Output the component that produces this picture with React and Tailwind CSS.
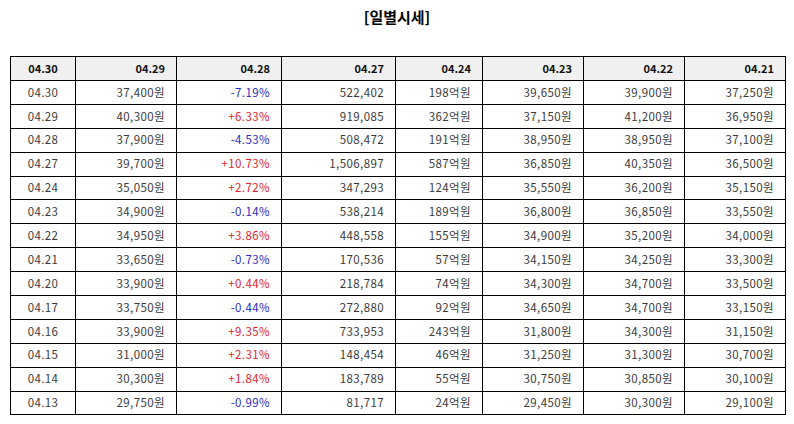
import React from "react";

const headers = ["04.30", "04.29", "04.28", "04.27", "04.24", "04.23", "04.22", "04.21"];

const rows = [
  ["04.30", "37,400원", "-7.19%", "522,402", "198억원", "39,650원", "39,900원", "37,250원"],
  ["04.29", "40,300원", "+6.33%", "919,085", "362억원", "37,150원", "41,200원", "36,950원"],
  ["04.28", "37,900원", "-4.53%", "508,472", "191억원", "38,950원", "38,950원", "37,100원"],
  ["04.27", "39,700원", "+10.73%", "1,506,897", "587억원", "36,850원", "40,350원", "36,500원"],
  ["04.24", "35,050원", "+2.72%", "347,293", "124억원", "35,550원", "36,200원", "35,150원"],
  ["04.23", "34,900원", "-0.14%", "538,214", "189억원", "36,800원", "36,850원", "33,550원"],
  ["04.22", "34,950원", "+3.86%", "448,558", "155억원", "34,900원", "35,200원", "34,000원"],
  ["04.21", "33,650원", "-0.73%", "170,536", "57억원", "34,150원", "34,250원", "33,300원"],
  ["04.20", "33,900원", "+0.44%", "218,784", "74억원", "34,300원", "34,700원", "33,500원"],
  ["04.17", "33,750원", "-0.44%", "272,880", "92억원", "34,650원", "34,700원", "33,150원"],
  ["04.16", "33,900원", "+9.35%", "733,953", "243억원", "31,800원", "34,300원", "31,150원"],
  ["04.15", "31,000원", "+2.31%", "148,454", "46억원", "31,250원", "31,300원", "30,700원"],
  ["04.14", "30,300원", "+1.84%", "183,789", "55억원", "30,750원", "30,850원", "30,100원"],
  ["04.13", "29,750원", "-0.99%", "81,717", "24억원", "29,450원", "30,300원", "29,100원"],
];

const widths = [65, 101, 105, 114, 87, 101, 101, 101];

const App = () => {
  return (
    <div className="w-[794px] h-[424px] bg-white font-['Noto_Sans_CJK_KR',sans-serif] text-[#3a3a3a]">
      {/* Title */}
      <h1 className="pt-[6px] h-[56px] text-center text-[15px] font-bold text-black leading-[22px]">
        [일별시세]
      </h1>

      {/* Table */}
      <div className="px-[10px]">
        <table className="w-[775px] table-fixed border-collapse">
          <colgroup>
            {widths.map((w, i) => (
              <col key={i} style={{ width: w }} />
            ))}
          </colgroup>
          <thead>
            <tr className="h-[24px] bg-[#f0f0f0]">
              {headers.map((h, i) => (
                <th
                  key={h}
                  className={
                    "border border-black text-[11px] font-bold text-[#111] leading-none " +
                    (i === 0 ? "text-center" : "text-right pr-[11px]")
                  }
                >
                  {h}
                </th>
              ))}
            </tr>
          </thead>
          <tbody>
            {rows.map((row) => (
              <tr key={row[0]} className="h-[23.9px]">
                {row.map((cell, i) => {
                  let color = "";
                  if (i === 2) {
                    color = cell.startsWith("+") ? "text-[#e0242c]" : "text-[#2b2bbf]";
                  }
                  return (
                    <td
                      key={i}
                      className={
                        "border border-black text-[11.5px] tracking-[0.4px] leading-none " +
                        (i === 0 ? "text-center " : "text-right pr-[11px] ") +
                        color
                      }
                    >
                      {cell}
                    </td>
                  );
                })}
              </tr>
            ))}
          </tbody>
        </table>
      </div>
    </div>
  );
};

export default App;
